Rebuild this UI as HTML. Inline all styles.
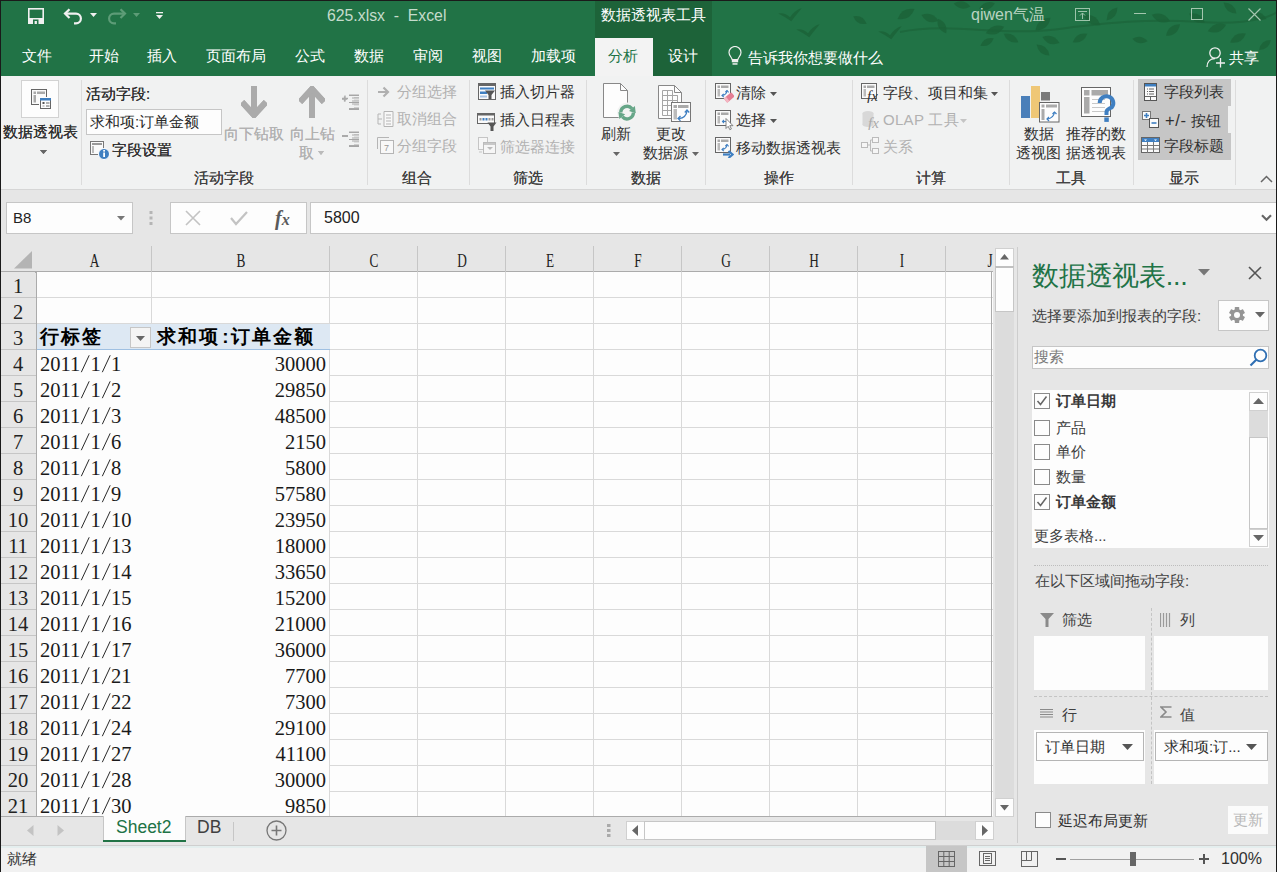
<!DOCTYPE html>
<html><head><meta charset="utf-8">
<style>
*{box-sizing:border-box;margin:0;padding:0}
html,body{width:1277px;height:872px;overflow:hidden;background:#e6e6e6;font-family:"Liberation Sans",sans-serif;color:#262626;position:relative}
.a{position:absolute;white-space:nowrap}
.t{color:#fff;font-size:15px}
.cv{line-height:26px;font-family:"Liberation Serif",serif;font-size:20.5px;color:#1a1a1a;padding-top:2px}
.sl{vertical-align:top;display:inline-block}

</style></head><body>
<div class="a" style="left:0;top:0;width:1277px;height:76px;background:#217346"></div>
<div class="a" style="left:595px;top:0;width:117px;height:76px;background:#1d6339"></div>
<div class="a" style="left:595px;top:38px;width:58px;height:38px;background:#f3f3f3"></div>
<!--LEAVES--><svg class="a" style="left:0;top:0" width="1277" height="76"><g fill="#1b6137" opacity=".75"><path transform="translate(906 14) rotate(-30)" d="M-9.799999999999999 0Q0 -8.232 9.799999999999999 0Q0 8.232 -9.799999999999999 0z"/><path transform="translate(930 18) rotate(20)" d="M-9.1 0Q0 -7.643999999999999 9.1 0Q0 7.643999999999999 -9.1 0z"/><path transform="translate(942 26) rotate(60)" d="M-8.399999999999999 0Q0 -7.055999999999998 8.399999999999999 0Q0 7.055999999999998 -8.399999999999999 0z"/><path transform="translate(995 30) rotate(-20)" d="M-9.799999999999999 0Q0 -8.232 9.799999999999999 0Q0 8.232 -9.799999999999999 0z"/><path transform="translate(1011 38) rotate(30)" d="M-8.399999999999999 0Q0 -7.055999999999998 8.399999999999999 0Q0 7.055999999999998 -8.399999999999999 0z"/><path transform="translate(1043 24) rotate(-40)" d="M-9.799999999999999 0Q0 -8.232 9.799999999999999 0Q0 8.232 -9.799999999999999 0z"/><path transform="translate(1051 40) rotate(20)" d="M-9.1 0Q0 -7.643999999999999 9.1 0Q0 7.643999999999999 -9.1 0z"/><path transform="translate(1080 38) rotate(-30)" d="M-8.399999999999999 0Q0 -7.055999999999998 8.399999999999999 0Q0 7.055999999999998 -8.399999999999999 0z"/><path transform="translate(1092 20) rotate(30)" d="M-9.799999999999999 0Q0 -8.232 9.799999999999999 0Q0 8.232 -9.799999999999999 0z"/><path transform="translate(1112 14) rotate(-50)" d="M-8.399999999999999 0Q0 -7.055999999999998 8.399999999999999 0Q0 7.055999999999998 -8.399999999999999 0z"/><path transform="translate(1161 18) rotate(20)" d="M-9.799999999999999 0Q0 -8.232 9.799999999999999 0Q0 8.232 -9.799999999999999 0z"/><path transform="translate(1173 30) rotate(-40)" d="M-9.1 0Q0 -7.643999999999999 9.1 0Q0 7.643999999999999 -9.1 0z"/><path transform="translate(1197 18) rotate(30)" d="M-9.1 0Q0 -7.643999999999999 9.1 0Q0 7.643999999999999 -9.1 0z"/><path transform="translate(1217 28) rotate(-20)" d="M-9.799999999999999 0Q0 -8.232 9.799999999999999 0Q0 8.232 -9.799999999999999 0z"/><path transform="translate(1230 8) rotate(40)" d="M-8.399999999999999 0Q0 -7.055999999999998 8.399999999999999 0Q0 7.055999999999998 -8.399999999999999 0z"/><path transform="translate(1238 38) rotate(-30)" d="M-9.1 0Q0 -7.643999999999999 9.1 0Q0 7.643999999999999 -9.1 0z"/><path transform="translate(1258 16) rotate(20)" d="M-9.1 0Q0 -7.643999999999999 9.1 0Q0 7.643999999999999 -9.1 0z"/><path transform="translate(962 5) rotate(10)" d="M-8.399999999999999 0Q0 -7.055999999999998 8.399999999999999 0Q0 7.055999999999998 -8.399999999999999 0z"/><path transform="translate(987 6) rotate(-20)" d="M-8.399999999999999 0Q0 -7.055999999999998 8.399999999999999 0Q0 7.055999999999998 -8.399999999999999 0z"/><path transform="translate(1043 50) rotate(40)" d="M-8.399999999999999 0Q0 -7.055999999999998 8.399999999999999 0Q0 7.055999999999998 -8.399999999999999 0z"/><path transform="translate(987 42) rotate(-30)" d="M-7.699999999999999 0Q0 -6.467999999999999 7.699999999999999 0Q0 6.467999999999999 -7.699999999999999 0z"/><path transform="translate(860 20) rotate(30)" d="M-7.699999999999999 0Q0 -6.467999999999999 7.699999999999999 0Q0 6.467999999999999 -7.699999999999999 0z"/><path transform="translate(1140 40) rotate(10)" d="M-7.699999999999999 0Q0 -6.467999999999999 7.699999999999999 0Q0 6.467999999999999 -7.699999999999999 0z"/><path transform="translate(1265 45) rotate(-40)" d="M-7.699999999999999 0Q0 -6.467999999999999 7.699999999999999 0Q0 6.467999999999999 -7.699999999999999 0z"/><path transform="translate(790 16) scale(1.3)" d="M-9 -2Q-4 -3 0 1Q4 -5 9 -6Q4 0 1 4Q-3 1 -9 -2z"/><path transform="translate(808 32) scale(1.3)" d="M-9 -2Q-4 -3 0 1Q4 -5 9 -6Q4 0 1 4Q-3 1 -9 -2z"/><path transform="translate(890 34) scale(1.3)" d="M-9 -2Q-4 -3 0 1Q4 -5 9 -6Q4 0 1 4Q-3 1 -9 -2z"/></g><path d="M900 32C950 22 1000 36 1050 30S1140 18 1200 22 1277 12 1277 12" fill="none" stroke="#1b6137" stroke-width="2" opacity=".6"/></svg>
<!--/LEAVES-->
<!-- QAT -->
<svg class="a" style="left:28px;top:8px" width="16" height="16" viewBox="0 0 16 16"><rect x=".8" y=".8" width="14.4" height="14.4" fill="none" stroke="#f0f0f0" stroke-width="1.6"/><rect x="0" y="10" width="16" height="6" fill="#f0f0f0"/><rect x="5" y="11.5" width="5.5" height="4.5" fill="#217346"/><rect x="6.6" y="13" width="2.3" height="3" fill="#f0f0f0"/></svg>
<svg class="a" style="left:63px;top:8px" width="20" height="17" viewBox="0 0 20 17"><path d="M6.5 1.2L2 5.6l4.5 4.4" fill="none" stroke="#f0f0f0" stroke-width="2.2"/><path d="M2.5 5.6H13A4.9 4.9 0 0 1 13 15.4H11" fill="none" stroke="#f0f0f0" stroke-width="2.2"/></svg>
<svg class="a" style="left:90px;top:13px" width="7" height="4"><path d="M0 0h7L3.5 4z" fill="#f0f0f0"/></svg>
<svg class="a" style="left:107px;top:8px" width="20" height="17" viewBox="0 0 20 17"><path d="M13.5 1.2L18 5.6l-4.5 4.4" fill="none" stroke="#5d9c77" stroke-width="2.2"/><path d="M17.5 5.6H7A4.9 4.9 0 0 0 7 15.4H9" fill="none" stroke="#5d9c77" stroke-width="2.2"/></svg>
<svg class="a" style="left:133px;top:13px" width="7" height="4"><path d="M0 0h7L3.5 4z" fill="#5d9c77"/></svg>
<svg class="a" style="left:156px;top:12px" width="7" height="7"><rect x="0" y="0" width="7" height="1.3" fill="#f0f0f0"/><path d="M0 3h7L3.5 7z" fill="#f0f0f0"/></svg>
<div class="a t" style="left:327px;top:5.5px;font-size:15.8px;color:#c5dccc;line-height:20px">625.xlsx&nbsp; - &nbsp;Excel</div>
<div class="a t" style="left:601px;top:5px;line-height:20px">数据透视表工具</div>
<div class="a t" style="left:971px;top:5px;color:#b9d3c1;line-height:20px;font-size:16px">qiwen气温</div>
<svg class="a" style="left:1075px;top:8px" width="15" height="13"><rect x=".5" y=".5" width="14" height="12" fill="none" stroke="#9cc4aa"/><path d="M3 3.5h9M7.5 5v6M5 7.5l2.5-2.5 2.5 2.5" stroke="#9cc4aa" fill="none"/></svg>
<div class="a" style="left:1134px;top:13px;width:12px;height:1px;background:#a3c6ae"></div>
<div class="a" style="left:1191px;top:8px;width:12px;height:12px;border:1px solid #a3c6ae"></div>
<svg class="a" style="left:1248px;top:8px" width="13" height="13"><path d="M.5 .5l12 12M12.5 .5l-12 12" stroke="#a3c6ae" stroke-width="1.2"/></svg>
<!-- tabs -->
<div class="a t" style="left:22px;top:46px;line-height:20px">文件</div>
<div class="a t" style="left:89px;top:46px;line-height:20px">开始</div>
<div class="a t" style="left:147px;top:46px;line-height:20px">插入</div>
<div class="a t" style="left:206px;top:46px;line-height:20px">页面布局</div>
<div class="a t" style="left:295px;top:46px;line-height:20px">公式</div>
<div class="a t" style="left:354px;top:46px;line-height:20px">数据</div>
<div class="a t" style="left:413px;top:46px;line-height:20px">审阅</div>
<div class="a t" style="left:472px;top:46px;line-height:20px">视图</div>
<div class="a t" style="left:531px;top:46px;line-height:20px">加载项</div>
<div class="a t" style="left:608px;top:46px;line-height:20px;color:#217346">分析</div>
<div class="a t" style="left:668px;top:46px;line-height:20px">设计</div>
<svg class="a" style="left:728px;top:46px" width="14" height="20" viewBox="0 0 14 20"><path d="M4.2 13.5C3.5 11 1 9.5 1 6.5a6 6 0 0 1 12 0c0 3-2.5 4.5-3.2 7z" fill="none" stroke="#f0f0f0" stroke-width="1.2"/><rect x="3.8" y="13.3" width="6.4" height="3" fill="#f0f0f0"/><rect x="4.5" y="17.2" width="5" height="1.5" fill="#f0f0f0"/></svg>
<div class="a t" style="left:748px;top:48px;line-height:20px">告诉我你想要做什么</div>
<svg class="a" style="left:1206px;top:47px" width="20" height="21" viewBox="0 0 20 21"><circle cx="9" cy="6" r="5.2" fill="none" stroke="#f0f0f0" stroke-width="1.3"/><path d="M1 20c0-5 3-8.5 8-8.5" fill="none" stroke="#f0f0f0" stroke-width="1.3"/><path d="M10 16h9M14.5 11v9.5" stroke="#f0f0f0" stroke-width="1.3"/></svg>
<div class="a t" style="left:1229px;top:48px;line-height:20px">共享</div>

<div class="a" style="left:0;top:76px;width:1277px;height:114px;background:#f1f2f2;border-bottom:1px solid #d6d6d6"></div>
<div class="a" style="left:81px;top:80px;width:1px;height:105px;background:#dcdcdc"></div>
<div class="a" style="left:367px;top:80px;width:1px;height:105px;background:#dcdcdc"></div>
<div class="a" style="left:469px;top:80px;width:1px;height:105px;background:#dcdcdc"></div>
<div class="a" style="left:586px;top:80px;width:1px;height:105px;background:#dcdcdc"></div>
<div class="a" style="left:705px;top:80px;width:1px;height:105px;background:#dcdcdc"></div>
<div class="a" style="left:852px;top:80px;width:1px;height:105px;background:#dcdcdc"></div>
<div class="a" style="left:1009px;top:80px;width:1px;height:105px;background:#dcdcdc"></div>
<div class="a" style="left:1133px;top:80px;width:1px;height:105px;background:#dcdcdc"></div>
<div class="a" style="left:1235px;top:80px;width:1px;height:105px;background:#dcdcdc"></div>
<div class="a" style="left:194.0px;top:168px;line-height:20px;font-size:15px;color:#404040;">活动字段</div>
<div class="a" style="left:402.0px;top:168px;line-height:20px;font-size:15px;color:#404040;">组合</div>
<div class="a" style="left:513.0px;top:168px;line-height:20px;font-size:15px;color:#404040;">筛选</div>
<div class="a" style="left:631.0px;top:168px;line-height:20px;font-size:15px;color:#404040;">数据</div>
<div class="a" style="left:764.0px;top:168px;line-height:20px;font-size:15px;color:#404040;">操作</div>
<div class="a" style="left:916.0px;top:168px;line-height:20px;font-size:15px;color:#404040;">计算</div>
<div class="a" style="left:1056.0px;top:168px;line-height:20px;font-size:15px;color:#404040;">工具</div>
<div class="a" style="left:1169.0px;top:168px;line-height:20px;font-size:15px;color:#404040;">显示</div>
<div class="a" style="left:21px;top:80px;width:38px;height:38px;background:#fdfdfd;border:1px solid #d2d2d2"></div>
<svg class="a" style="left:31px;top:89px" width="22" height="22" viewBox="0 0 22 22"><rect x=".5" y=".5" width="15" height="15" fill="#fafafa" stroke="#666"/><rect x="2.5" y="2.5" width="2.5" height="2.5" fill="#aaa"/><rect x="6" y="2.5" width="8" height="2.5" fill="#aaa"/><rect x="2.5" y="6" width="2.5" height="7.5" fill="#aaa"/><rect x="8" y="8" width="13" height="13" fill="#fdfdfd"/><rect x="9.5" y="9.5" width="10" height="10" fill="#fdfdfd" stroke="#666"/><rect x="9" y="9" width="11" height="2.5" fill="#3f7fc1"/><rect x="11.5" y="13" width="2" height="2" fill="#555"/><rect x="11.5" y="16" width="2" height="2" fill="#ccc"/><path d="M15 14h3.5M15 17h3.5" stroke="#666"/></svg>
<div class="a" style="left:3px;top:122px;line-height:20px;font-size:15px;color:#303030;">数据透视表</div>
<svg class="a" style="left:40px;top:150px" width="7" height="4"><path d="M0 0h7L3.5 4z" fill="#666"/></svg>
<div class="a" style="left:86px;top:84px;line-height:20px;font-size:15px;color:#303030;">活动字段:</div>
<div class="a" style="left:86px;top:109px;width:136px;height:26px;background:#fdfdfd;border:1px solid #c6c6c6"></div>
<div class="a" style="left:90px;top:112px;line-height:20px;font-size:15px;color:#262626;">求和项:订单金额</div>
<svg class="a" style="left:90px;top:141px" width="20" height="19" viewBox="0 0 20 19"><rect x=".5" y=".5" width="13" height="13" fill="#fafafa" stroke="#777"/><rect x="2" y="2" width="10" height="2" fill="#999"/><rect x="2" y="5" width="2" height="7" fill="#bbb"/><circle cx="14" cy="13" r="5.5" fill="#3f7fc1" stroke="#fff"/><rect x="13.2" y="11.5" width="1.8" height="4.5" fill="#fff"/><rect x="13.2" y="9" width="1.8" height="1.6" fill="#fff"/></svg>
<div class="a" style="left:112px;top:140px;line-height:20px;font-size:15px;color:#303030;">字段设置</div>
<svg class="a" style="left:241px;top:86px" width="26" height="32" viewBox="0 0 26 32"><rect x="10" y="0" width="6" height="26" fill="#ababab"/><path d="M1 16l12 13 12-13" fill="none" stroke="#ababab" stroke-width="6"/></svg>
<svg class="a" style="left:299px;top:86px" width="26" height="32" viewBox="0 0 26 32"><rect x="10" y="6" width="6" height="26" fill="#ababab"/><path d="M1 16l12-13 12 13" fill="none" stroke="#ababab" stroke-width="6"/></svg>
<div class="a" style="left:224px;top:124px;line-height:20px;font-size:15px;color:#b1b1b1;">向下钻取</div>
<div class="a" style="left:290px;top:124px;line-height:20px;font-size:15px;color:#b1b1b1;">向上钻</div>
<div class="a" style="left:299px;top:143px;line-height:20px;font-size:15px;color:#b1b1b1;">取</div>
<svg class="a" style="left:318px;top:151px" width="6" height="4"><path d="M0 0h6L3.0 4z" fill="#bbb"/></svg>
<svg class="a" style="left:342px;top:94px" width="17" height="17" viewBox="0 0 17 17"><path d="M0 4.5h6M3 1.5v6" stroke="#aaa" stroke-width="1.3"/><path d="M7 1.5h10M7 8.5h10M7 15.5h10" stroke="#a5a5a5"/><path d="M12 3.5h5M12 6h5M12 11h5M12 13.5h5" stroke="#cfcfcf"/></svg>
<svg class="a" style="left:342px;top:131px" width="17" height="17" viewBox="0 0 17 17"><path d="M0 5h6" stroke="#999" stroke-width="1.6"/><path d="M7 1.5h10M7 8.5h10M7 15.5h10" stroke="#a5a5a5"/><path d="M12 3.5h5M12 6h5M12 11h5M12 13.5h5" stroke="#cfcfcf"/></svg>
<div class="a" style="left:194.0px;top:168px;line-height:20px;font-size:15px;color:#404040;">活动字段</div>
<div class="a" style="left:402.0px;top:168px;line-height:20px;font-size:15px;color:#404040;">组合</div>
<div class="a" style="left:513.0px;top:168px;line-height:20px;font-size:15px;color:#404040;">筛选</div>
<div class="a" style="left:631.0px;top:168px;line-height:20px;font-size:15px;color:#404040;">数据</div>
<div class="a" style="left:764.0px;top:168px;line-height:20px;font-size:15px;color:#404040;">操作</div>
<div class="a" style="left:916.0px;top:168px;line-height:20px;font-size:15px;color:#404040;">计算</div>
<div class="a" style="left:1056.0px;top:168px;line-height:20px;font-size:15px;color:#404040;">工具</div>
<div class="a" style="left:1169.0px;top:168px;line-height:20px;font-size:15px;color:#404040;">显示</div>
<div class="a" style="left:21px;top:80px;width:38px;height:38px;background:#fdfdfd;border:1px solid #d2d2d2"></div>
<svg class="a" style="left:31px;top:89px" width="22" height="22" viewBox="0 0 22 22"><rect x=".5" y=".5" width="15" height="15" fill="#fafafa" stroke="#666"/><rect x="2.5" y="2.5" width="2.5" height="2.5" fill="#aaa"/><rect x="6" y="2.5" width="8" height="2.5" fill="#aaa"/><rect x="2.5" y="6" width="2.5" height="7.5" fill="#aaa"/><rect x="8" y="8" width="13" height="13" fill="#fdfdfd"/><rect x="9.5" y="9.5" width="10" height="10" fill="#fdfdfd" stroke="#666"/><rect x="9" y="9" width="11" height="2.5" fill="#3f7fc1"/><rect x="11.5" y="13" width="2" height="2" fill="#555"/><rect x="11.5" y="16" width="2" height="2" fill="#ccc"/><path d="M15 14h3.5M15 17h3.5" stroke="#666"/></svg>
<div class="a" style="left:3px;top:122px;line-height:20px;font-size:15px;color:#303030;">数据透视表</div>
<svg class="a" style="left:40px;top:150px" width="7" height="4"><path d="M0 0h7L3.5 4z" fill="#666"/></svg>
<div class="a" style="left:86px;top:84px;line-height:20px;font-size:15px;color:#303030;">活动字段:</div>
<div class="a" style="left:86px;top:109px;width:136px;height:26px;background:#fdfdfd;border:1px solid #c6c6c6"></div>
<div class="a" style="left:90px;top:112px;line-height:20px;font-size:15px;color:#262626;">求和项:订单金额</div>
<svg class="a" style="left:90px;top:141px" width="20" height="19" viewBox="0 0 20 19"><rect x=".5" y=".5" width="13" height="13" fill="#fafafa" stroke="#777"/><rect x="2" y="2" width="10" height="2" fill="#999"/><rect x="2" y="5" width="2" height="7" fill="#bbb"/><circle cx="14" cy="13" r="5.5" fill="#3f7fc1" stroke="#fff"/><rect x="13.2" y="11.5" width="1.8" height="4.5" fill="#fff"/><rect x="13.2" y="9" width="1.8" height="1.6" fill="#fff"/></svg>
<div class="a" style="left:112px;top:140px;line-height:20px;font-size:15px;color:#303030;">字段设置</div>
<svg class="a" style="left:241px;top:86px" width="26" height="32" viewBox="0 0 26 32"><rect x="10" y="0" width="6" height="26" fill="#ababab"/><path d="M1 16l12 13 12-13" fill="none" stroke="#ababab" stroke-width="6"/></svg>
<svg class="a" style="left:299px;top:86px" width="26" height="32" viewBox="0 0 26 32"><rect x="10" y="6" width="6" height="26" fill="#ababab"/><path d="M1 16l12-13 12 13" fill="none" stroke="#ababab" stroke-width="6"/></svg>
<div class="a" style="left:224px;top:124px;line-height:20px;font-size:15px;color:#b1b1b1;">向下钻取</div>
<div class="a" style="left:290px;top:124px;line-height:20px;font-size:15px;color:#b1b1b1;">向上钻</div>
<div class="a" style="left:299px;top:143px;line-height:20px;font-size:15px;color:#b1b1b1;">取</div>
<svg class="a" style="left:318px;top:151px" width="6" height="4"><path d="M0 0h6L3.0 4z" fill="#bbb"/></svg>
<svg class="a" style="left:342px;top:94px" width="17" height="16" viewBox="0 0 17 16"><path d="M0 5h5M2.5 2.5v5" stroke="#aaa" stroke-width="1.3"/><path d="M7 1h10M10 4h7M10 7h7M10 10h7M7 14.5h10" stroke="#aaa"/></svg>
<svg class="a" style="left:342px;top:131px" width="17" height="16" viewBox="0 0 17 16"><path d="M0 5h5" stroke="#aaa" stroke-width="1.3"/><path d="M7 1h10M10 4h7M10 7h7M10 10h7M7 14.5h10" stroke="#aaa"/></svg>
<svg class="a" style="left:378px;top:86px" width="13" height="12" viewBox="0 0 13 12"><path d="M0 6h9M5.5 1.5L10 6l-4.5 4.5" fill="none" stroke="#b0b0b0" stroke-width="2.2"/></svg>
<div class="a" style="left:397px;top:82px;line-height:20px;font-size:15px;color:#b1b1b1;">分组选择</div>
<svg class="a" style="left:377px;top:111px" width="17" height="16" viewBox="0 0 17 16"><path d="M7 .5h9v15H7z" fill="#f8f8f8" stroke="#b5b5b5"/><path d="M9 4h5M9 7h5M9 10h5M9 13h5" stroke="#b5b5b5"/><path d="M4 3h-3v10h3" fill="none" stroke="#b5b5b5"/><path d="M1 8h4" stroke="#b5b5b5"/></svg>
<div class="a" style="left:397px;top:109px;line-height:20px;font-size:15px;color:#b1b1b1;">取消组合</div>
<svg class="a" style="left:377px;top:137px" width="17" height="17" viewBox="0 0 17 17"><path d="M.5 12V.5H12" fill="none" stroke="#b5b5b5"/><rect x="3.5" y="3.5" width="13" height="13" fill="#f8f8f8" stroke="#b5b5b5"/><text x="7" y="14" font-size="9" fill="#999" font-family="Liberation Sans">7</text></svg>
<div class="a" style="left:397px;top:136px;line-height:20px;font-size:15px;color:#b1b1b1;">分组字段</div>
<svg class="a" style="left:478px;top:83px" width="18" height="17" viewBox="0 0 18 17"><rect x=".5" y=".5" width="17" height="16" fill="#fafafa" stroke="#666"/><rect x="0" y="0" width="18" height="3" fill="#666"/><rect x="2" y="4.5" width="14" height="2" fill="#3f7fc1"/><rect x="2" y="8.5" width="7" height="2.5" fill="#3f7fc1"/><rect x="2" y="12.5" width="7" height="2" fill="#a9c4e4"/><path d="M7 7.5h10l-3.5 4.5v4h-3v-4z" fill="#555"/></svg>
<div class="a" style="left:500px;top:82px;line-height:20px;font-size:15px;color:#303030;">插入切片器</div>
<svg class="a" style="left:477px;top:113px" width="20" height="18" viewBox="0 0 20 18"><rect x=".5" y=".5" width="17" height="10" fill="#fafafa" stroke="#666"/><rect x="0" y="0" width="18" height="2.5" fill="#666"/><rect x="2.5" y="5" width="2" height="2.5" fill="#999"/><rect x="5.5" y="5" width="2" height="2.5" fill="#3f7fc1"/><rect x="8.5" y="5" width="2" height="2.5" fill="#3f7fc1"/><rect x="11.5" y="5" width="2" height="2.5" fill="#999"/><rect x="14.5" y="5" width="2" height="2.5" fill="#999"/><path d="M10.5 9.5h9l-3 4v4.5h-3v-4.5z" fill="#555"/></svg>
<div class="a" style="left:500px;top:110px;line-height:20px;font-size:15px;color:#303030;">插入日程表</div>
<svg class="a" style="left:478px;top:137px" width="18" height="18" viewBox="0 0 18 18"><rect x=".5" y=".5" width="9" height="12" fill="#f6f6f6" stroke="#c5c5c5"/><rect x="5.5" y="5.5" width="12" height="11" fill="#f6f6f6" stroke="#bbb"/><rect x="6" y="6" width="11" height="2" fill="#c8c8c8"/><path d="M9 10h6l-3 3z" fill="#bbb"/><path d="M1 15h3" stroke="#c5c5c5"/></svg>
<div class="a" style="left:500px;top:137px;line-height:20px;font-size:15px;color:#b1b1b1;">筛选器连接</div>
<svg class="a" style="left:603px;top:83px" width="36" height="40" viewBox="0 0 36 40"><path d="M.5 .5h17l7 7v27H.5z" fill="#fdfdfd" stroke="#888"/><path d="M17.5 .5v7h7" fill="none" stroke="#888"/><circle cx="24.1" cy="29.6" r="10" fill="#f3f3f3"/><path d="M17.8 29.6A6.3 6.3 0 0 1 28.93 25.55" fill="none" stroke="#66a688" stroke-width="3.4"/><path d="M31.84 23.1L26.02 28L32.8 30.2z" fill="#66a688"/><path d="M30.4 29.6A6.3 6.3 0 0 1 19.27 33.65" fill="none" stroke="#66a688" stroke-width="3.4"/><path d="M16.36 36.09L22.18 31.21L15.41 29.05z" fill="#66a688"/></svg>
<div class="a" style="left:601px;top:124px;line-height:20px;font-size:15px;color:#303030;">刷新</div>
<svg class="a" style="left:613px;top:152px" width="7" height="4"><path d="M0 0h7L3.5 4z" fill="#666"/></svg>
<svg class="a" style="left:657px;top:84px" width="35" height="39" viewBox="0 0 35 39"><path d="M1.5 1.5h16l7 7v26h-23z" fill="#fdfdfd" stroke="#888"/><path d="M17.5 1.5v7h7" fill="none" stroke="#888"/><path d="M5.5 6.5h10v5h5v20h-15z" fill="none" stroke="#a5a5a5"/><path d="M5.5 11.5h15M5.5 16.5h15M5.5 21.5h15M5.5 26.5h15M10.5 6.5v25M15.5 6.5v25" stroke="#a5a5a5"/><rect x="14.5" y="18.5" width="19" height="19" fill="#fdfdfd" stroke="#777"/><rect x="16.5" y="21" width="3.5" height="3" fill="#aaa"/><rect x="21" y="21" width="10.5" height="3" fill="#aaa"/><rect x="16.5" y="25" width="3.5" height="10.5" fill="#bbb"/><path d="M22 34.5Q29 34 30 27" fill="none" stroke="#3f7fc1" stroke-width="1.4"/><path d="M23.5 32l-2.5 2.5 2.5 2.2M27.8 28.5l2.2-2.5 2.2 2.5" fill="none" stroke="#3f7fc1" stroke-width="1.3"/></svg>
<div class="a" style="left:656px;top:124px;line-height:20px;font-size:15px;color:#303030;">更改</div>
<div class="a" style="left:643px;top:143px;line-height:20px;font-size:15px;color:#303030;">数据源</div>
<svg class="a" style="left:692px;top:152px" width="7" height="4"><path d="M0 0h7L3.5 4z" fill="#666"/></svg>
<svg class="a" style="left:714px;top:83px" width="20" height="21" viewBox="0 0 20 21"><rect x="1.5" y=".5" width="15" height="15" fill="#fafafa" stroke="#666"/><rect x="3.5" y="2.5" width="2.5" height="2.5" fill="#aaa"/><rect x="7" y="2.5" width="7.5" height="2.5" fill="#aaa"/><rect x="3.5" y="6" width="2.5" height="7.5" fill="#bbb"/><path d="M8 12.5Q12.5 12 13 7.5" fill="none" stroke="#3f7fc1" stroke-width="1.2"/><path d="M9.8 10.8L8 12.5l1.8 1.6M11.3 9.2L13 7.5l1.6 1.8" fill="none" stroke="#3f7fc1" stroke-width="1.1"/><g transform="rotate(-40 15 15)"><rect x="10.5" y="12" width="10" height="5.5" rx="1" fill="#e57e94"/><rect x="10.5" y="12" width="3" height="5.5" fill="#f4b6c2"/></g></svg>
<div class="a" style="left:736px;top:83px;line-height:20px;font-size:15px;color:#303030;">清除</div>
<svg class="a" style="left:770px;top:92px" width="7" height="4"><path d="M0 0h7L3.5 4z" fill="#555"/></svg>
<svg class="a" style="left:714px;top:110px" width="20" height="21" viewBox="0 0 20 21"><rect x="1.5" y=".5" width="15" height="15" fill="#fafafa" stroke="#666"/><rect x="3.5" y="2.5" width="2.5" height="2.5" fill="#aaa"/><rect x="7" y="2.5" width="7.5" height="2.5" fill="#aaa"/><rect x="3.5" y="6" width="2.5" height="7.5" fill="#bbb"/><path d="M12 11.5H8.5M10 10l-1.5 1.5 1.5 1.5" fill="none" stroke="#3f7fc1" stroke-width="1.1"/><path d="M12 8.5v10l2.2-2.2 1.6 3.4 1.6-.8-1.6-3.2h3.2z" fill="#fff" stroke="#777" stroke-width=".9"/></svg>
<div class="a" style="left:736px;top:110px;line-height:20px;font-size:15px;color:#303030;">选择</div>
<svg class="a" style="left:770px;top:119px" width="7" height="4"><path d="M0 0h7L3.5 4z" fill="#555"/></svg>
<svg class="a" style="left:714px;top:137px" width="20" height="21" viewBox="0 0 20 21"><rect x="1.5" y=".5" width="15" height="15" fill="#fafafa" stroke="#666"/><rect x="3.5" y="2.5" width="2.5" height="2.5" fill="#aaa"/><rect x="7" y="2.5" width="7.5" height="2.5" fill="#aaa"/><rect x="3.5" y="6" width="2.5" height="7.5" fill="#bbb"/><path d="M8 12.5Q12.5 12 13 7.5" fill="none" stroke="#3f7fc1" stroke-width="1.2"/><path d="M9.8 10.8L8 12.5l1.8 1.6M11.3 9.2L13 7.5l1.6 1.8" fill="none" stroke="#3f7fc1" stroke-width="1.1"/><path d="M9 17.5h7" stroke="#3f7fc1" stroke-width="2.2"/><path d="M14.5 14l4 3.5-4 3.5" fill="none" stroke="#3f7fc1" stroke-width="2.2"/></svg>
<div class="a" style="left:736px;top:138px;line-height:20px;font-size:15px;color:#303030;">移动数据透视表</div>
<svg class="a" style="left:860px;top:83px" width="22" height="20" viewBox="0 0 22 20"><rect x="1.5" y=".5" width="15" height="15" fill="#fafafa" stroke="#666"/><rect x="3.5" y="2.5" width="2.5" height="2.5" fill="#aaa"/><rect x="7" y="2.5" width="7.5" height="2.5" fill="#aaa"/><rect x="3.5" y="6" width="2.5" height="7.5" fill="#bbb"/><text x="7" y="17.5" font-size="15" font-style="italic" font-family="Liberation Serif" fill="#333">fx</text></svg>
<div class="a" style="left:883px;top:83px;line-height:20px;font-size:15px;color:#303030;">字段、项目和集</div>
<svg class="a" style="left:991px;top:92px" width="7" height="4"><path d="M0 0h7L3.5 4z" fill="#555"/></svg>
<svg class="a" style="left:861px;top:110px" width="22" height="20" viewBox="0 0 22 20"><ellipse cx="7" cy="3.5" rx="5.5" ry="2.5" fill="#d8d8d8"/><rect x="1.5" y="3.5" width="11" height="11" fill="#d8d8d8"/><ellipse cx="7" cy="14.5" rx="5.5" ry="2.5" fill="#d8d8d8"/><text x="7" y="18" font-size="15" font-style="italic" font-family="Liberation Serif" fill="#aaa">fx</text></svg>
<div class="a" style="left:883px;top:110px;line-height:20px;font-size:15px;color:#b1b1b1;letter-spacing:.3px">OLAP 工具</div>
<svg class="a" style="left:960px;top:119px" width="7" height="4"><path d="M0 0h7L3.5 4z" fill="#c5c5c5"/></svg>
<svg class="a" style="left:861px;top:137px" width="18" height="17" viewBox="0 0 18 17"><rect x=".5" y="5.5" width="6" height="5" fill="#f6f6f6" stroke="#bbb"/><rect x="11.5" y=".5" width="6" height="5" fill="#f6f6f6" stroke="#bbb"/><rect x="11.5" y="11.5" width="6" height="5" fill="#f6f6f6" stroke="#bbb"/><path d="M7 8h2.5M9.5 3v11M9.5 3h2M9.5 14h2" fill="none" stroke="#bbb"/></svg>
<div class="a" style="left:883px;top:137px;line-height:20px;font-size:15px;color:#b1b1b1;">关系</div>
<svg class="a" style="left:1021px;top:86px" width="39" height="37" viewBox="0 0 39 37"><rect x="0" y="10" width="9" height="22" fill="#4a7fb9"/><rect x="10" y="0" width="9" height="32" fill="#efc776"/><rect x="20" y="6" width="9" height="8.5" fill="#7a7a7a"/><rect x="18.5" y="16.5" width="19.5" height="19.5" fill="#fdfdfd" stroke="#666"/><rect x="20.5" y="18.5" width="3" height="3" fill="#aaa"/><rect x="25" y="18.5" width="11" height="3" fill="#aaa"/><rect x="20.5" y="23" width="3" height="11" fill="#aaa"/><path d="M26 33Q32.5 32.5 33.5 26" fill="none" stroke="#3f7fc1" stroke-width="1.3"/><path d="M28 31l-2 2 2 2M31.5 28l2-2 2 2" fill="none" stroke="#3f7fc1" stroke-width="1.2"/></svg>
<div class="a" style="left:1024px;top:124px;line-height:20px;font-size:15px;color:#303030;">数据</div>
<div class="a" style="left:1016px;top:143px;line-height:20px;font-size:15px;color:#303030;">透视图</div>
<svg class="a" style="left:1081px;top:87px" width="36" height="36" viewBox="0 0 36 36"><rect x=".5" y=".5" width="29" height="29" fill="#fdfdfd" stroke="#666"/><rect x="3" y="3" width="5.5" height="5.5" fill="#aaa"/><rect x="10.5" y="3" width="16.5" height="5.5" fill="#aaa"/><rect x="3" y="10" width="5.5" height="16.5" fill="#aaa"/><path d="M11 12.5h13M11 16.5h13M11 20.5h13M11 24.5h13" stroke="#c8c8c8" stroke-width="1.2"/><path d="M18.7 16A6.8 6.8 0 1 1 30.7 20.4Q25.5 22.5 25.5 25V28" fill="none" stroke="#3f7fc1" stroke-width="4"/><rect x="23.3" y="30.4" width="4.5" height="4.5" fill="#3f7fc1"/></svg>
<div class="a" style="left:1066px;top:124px;line-height:20px;font-size:15px;color:#303030;">推荐的数</div>
<div class="a" style="left:1066px;top:143px;line-height:20px;font-size:15px;color:#303030;">据透视表</div>
<div class="a" style="left:1138px;top:79px;width:93px;height:81px;background:#c6c6c6"></div>
<svg class="a" style="left:1144px;top:83px" width="13" height="18" viewBox="0 0 13 18"><rect x=".5" y=".5" width="12" height="17" fill="#fafafa" stroke="#555"/><rect x="1" y="1" width="11" height="2.5" fill="#3f7fc1"/><path d="M3 6h1M5 6h5M3 8.5h1M5 8.5h5M3 11h1M5 11h5M1 13.5h11M6.5 13.5v4" stroke="#666"/></svg>
<div class="a" style="left:1164px;top:82px;line-height:20px;font-size:15px;color:#303030;">字段列表</div>
<svg class="a" style="left:1142px;top:111px" width="17" height="17" viewBox="0 0 17 17"><rect x=".5" y=".5" width="8" height="8" fill="#fafafa" stroke="#777"/><path d="M2 4.5h5M4.5 2v5" stroke="#3f7fc1" stroke-width="1.6"/><rect x="7.5" y="7.5" width="9" height="9" fill="#fafafa" stroke="#555"/><path d="M9.5 12h5" stroke="#3f7fc1" stroke-width="1.6"/></svg>
<div class="a" style="left:1165px;top:110px;line-height:20px;font-size:15px;color:#303030;"><span style="font-size:16.5px;letter-spacing:.6px">+/-</span>&nbsp;按钮</div>
<div class="a" style="left:1228px;top:106px;width:3px;height:27px;background:#f1f2f2"></div>
<svg class="a" style="left:1141px;top:137px" width="19" height="16" viewBox="0 0 19 16"><rect x=".5" y=".5" width="18" height="15" fill="#fafafa" stroke="#666"/><rect x="1" y="1" width="17" height="4" fill="#3f7fc1"/><path d="M1 8.5h17M1 12h17M6.5 5v11M12.5 5v11" stroke="#777"/><path d="M3 2.5h3l-1.5 1.5zM13 2.5h3l-1.5 1.5z" fill="#fff"/></svg>
<div class="a" style="left:1164px;top:136px;line-height:20px;font-size:15px;color:#303030;">字段标题</div>
<svg class="a" style="left:1260px;top:175px" width="13" height="8"><path d="M1 7l5.5-5.5L12 7" fill="none" stroke="#666" stroke-width="1.5"/></svg>
<div class="a" style="left:0;top:190px;width:1277px;height:56px;background:#e6e6e6"></div>
<div class="a" style="left:6px;top:202px;width:127px;height:32px;background:#fdfdfd;border:1px solid #c6c6c6"></div>
<div class="a" style="left:13px;top:208px;line-height:20px;font-size:15px;color:#222">B8</div>
<svg class="a" style="left:117px;top:216px" width="8" height="5"><path d="M0 0h8L4 4.5z" fill="#777"/></svg>
<svg class="a" style="left:149px;top:211px" width="4" height="14"><rect x=".5" y="0" width="3" height="3" fill="#b5b5b5"/><rect x=".5" y="5.5" width="3" height="3" fill="#b5b5b5"/><rect x=".5" y="11" width="3" height="3" fill="#b5b5b5"/></svg>
<div class="a" style="left:170px;top:202px;width:137px;height:32px;background:#fdfdfd;border:1px solid #c6c6c6"></div>
<svg class="a" style="left:185px;top:210px" width="16" height="16"><path d="M1 1l14 14M15 1L1 15" stroke="#c3c3c3" stroke-width="1.6"/></svg>
<svg class="a" style="left:230px;top:210px" width="18" height="16"><path d="M1 8l5 6L17 2" fill="none" stroke="#c3c3c3" stroke-width="2.2"/></svg>
<div class="a" style="left:275px;top:207px;line-height:22px;font-size:20px;color:#5a5a5a;font-family:'Liberation Serif',serif;font-style:italic;font-weight:bold">f<span style="font-size:16px">x</span></div>
<div class="a" style="left:310px;top:202px;width:967px;height:32px;background:#fdfdfd;border:1px solid #c6c6c6;border-right:none"></div>
<div class="a" style="left:324px;top:208px;line-height:20px;font-size:16px;color:#222">5800</div>
<svg class="a" style="left:1261px;top:214px" width="11" height="8"><path d="M1 1.2l4.5 4.5L10 1.2" fill="none" stroke="#666" stroke-width="2.2"/></svg>
<div class="a" style="left:0;top:246px;width:993px;height:570px;background:#fdfdfd;overflow:hidden">
<div class="a" style="left:0;top:0;width:993px;height:26px;background:#e6e6e6;border-bottom:1px solid #ababab"></div>
<div class="a" style="left:0;top:26px;width:37px;height:560px;background:#e6e6e6;border-right:1px solid #ababab"></div>
<div class="a" style="left:35px;top:25px;width:2px;height:2px;background:#ababab"></div>
<svg class="a" style="left:14px;top:5px" width="19" height="18"><path d="M18 0v17.5H0z" fill="#b4b4b4"/></svg>
<div class="a" style="left:151px;top:0;width:1px;height:26px;background:#c6c6c6"></div>
<div class="a" style="left:37px;top:2px;width:115px;text-align:center;line-height:26px;font-family:'Liberation Serif',serif;font-size:18.5px;color:#222;transform:scaleX(.72)">A</div>
<div class="a" style="left:151px;top:26px;width:1px;height:560px;background:#d9d9d9"></div>
<div class="a" style="left:329px;top:0;width:1px;height:26px;background:#c6c6c6"></div>
<div class="a" style="left:152px;top:2px;width:178px;text-align:center;line-height:26px;font-family:'Liberation Serif',serif;font-size:18.5px;color:#222;transform:scaleX(.72)">B</div>
<div class="a" style="left:329px;top:26px;width:1px;height:560px;background:#d9d9d9"></div>
<div class="a" style="left:417px;top:0;width:1px;height:26px;background:#c6c6c6"></div>
<div class="a" style="left:330px;top:2px;width:88px;text-align:center;line-height:26px;font-family:'Liberation Serif',serif;font-size:18.5px;color:#222;transform:scaleX(.72)">C</div>
<div class="a" style="left:417px;top:26px;width:1px;height:560px;background:#d9d9d9"></div>
<div class="a" style="left:505px;top:0;width:1px;height:26px;background:#c6c6c6"></div>
<div class="a" style="left:418px;top:2px;width:88px;text-align:center;line-height:26px;font-family:'Liberation Serif',serif;font-size:18.5px;color:#222;transform:scaleX(.72)">D</div>
<div class="a" style="left:505px;top:26px;width:1px;height:560px;background:#d9d9d9"></div>
<div class="a" style="left:593px;top:0;width:1px;height:26px;background:#c6c6c6"></div>
<div class="a" style="left:506px;top:2px;width:88px;text-align:center;line-height:26px;font-family:'Liberation Serif',serif;font-size:18.5px;color:#222;transform:scaleX(.72)">E</div>
<div class="a" style="left:593px;top:26px;width:1px;height:560px;background:#d9d9d9"></div>
<div class="a" style="left:681px;top:0;width:1px;height:26px;background:#c6c6c6"></div>
<div class="a" style="left:594px;top:2px;width:88px;text-align:center;line-height:26px;font-family:'Liberation Serif',serif;font-size:18.5px;color:#222;transform:scaleX(.72)">F</div>
<div class="a" style="left:681px;top:26px;width:1px;height:560px;background:#d9d9d9"></div>
<div class="a" style="left:769px;top:0;width:1px;height:26px;background:#c6c6c6"></div>
<div class="a" style="left:682px;top:2px;width:88px;text-align:center;line-height:26px;font-family:'Liberation Serif',serif;font-size:18.5px;color:#222;transform:scaleX(.72)">G</div>
<div class="a" style="left:769px;top:26px;width:1px;height:560px;background:#d9d9d9"></div>
<div class="a" style="left:857px;top:0;width:1px;height:26px;background:#c6c6c6"></div>
<div class="a" style="left:770px;top:2px;width:88px;text-align:center;line-height:26px;font-family:'Liberation Serif',serif;font-size:18.5px;color:#222;transform:scaleX(.72)">H</div>
<div class="a" style="left:857px;top:26px;width:1px;height:560px;background:#d9d9d9"></div>
<div class="a" style="left:945px;top:0;width:1px;height:26px;background:#c6c6c6"></div>
<div class="a" style="left:858px;top:2px;width:88px;text-align:center;line-height:26px;font-family:'Liberation Serif',serif;font-size:18.5px;color:#222;transform:scaleX(.72)">I</div>
<div class="a" style="left:945px;top:26px;width:1px;height:560px;background:#d9d9d9"></div>
<div class="a" style="left:1033px;top:0;width:1px;height:26px;background:#c6c6c6"></div>
<div class="a" style="left:946px;top:2px;width:88px;text-align:center;line-height:26px;font-family:'Liberation Serif',serif;font-size:18.5px;color:#222;transform:scaleX(.72)">J</div>
<div class="a" style="left:1033px;top:26px;width:1px;height:560px;background:#d9d9d9"></div>
<div class="a" style="left:0;top:51px;width:36px;height:1px;background:#c6c6c6"></div>
<div class="a" style="left:37px;top:51px;width:960px;height:1px;background:#d9d9d9"></div>
<div class="a" style="left:0;top:25px;width:36px;text-align:center;line-height:26px;font-family:'Liberation Serif',serif;font-size:20.5px;color:#222;padding-top:2px">1</div>
<div class="a" style="left:0;top:77px;width:36px;height:1px;background:#c6c6c6"></div>
<div class="a" style="left:37px;top:77px;width:960px;height:1px;background:#d9d9d9"></div>
<div class="a" style="left:0;top:51px;width:36px;text-align:center;line-height:26px;font-family:'Liberation Serif',serif;font-size:20.5px;color:#222;padding-top:2px">2</div>
<div class="a" style="left:0;top:103px;width:36px;height:1px;background:#c6c6c6"></div>
<div class="a" style="left:37px;top:103px;width:960px;height:1px;background:#d9d9d9"></div>
<div class="a" style="left:0;top:77px;width:36px;text-align:center;line-height:26px;font-family:'Liberation Serif',serif;font-size:20.5px;color:#222;padding-top:2px">3</div>
<div class="a" style="left:0;top:129px;width:36px;height:1px;background:#c6c6c6"></div>
<div class="a" style="left:37px;top:129px;width:960px;height:1px;background:#d9d9d9"></div>
<div class="a" style="left:0;top:103px;width:36px;text-align:center;line-height:26px;font-family:'Liberation Serif',serif;font-size:20.5px;color:#222;padding-top:2px">4</div>
<div class="a" style="left:0;top:155px;width:36px;height:1px;background:#c6c6c6"></div>
<div class="a" style="left:37px;top:155px;width:960px;height:1px;background:#d9d9d9"></div>
<div class="a" style="left:0;top:129px;width:36px;text-align:center;line-height:26px;font-family:'Liberation Serif',serif;font-size:20.5px;color:#222;padding-top:2px">5</div>
<div class="a" style="left:0;top:181px;width:36px;height:1px;background:#c6c6c6"></div>
<div class="a" style="left:37px;top:181px;width:960px;height:1px;background:#d9d9d9"></div>
<div class="a" style="left:0;top:155px;width:36px;text-align:center;line-height:26px;font-family:'Liberation Serif',serif;font-size:20.5px;color:#222;padding-top:2px">6</div>
<div class="a" style="left:0;top:207px;width:36px;height:1px;background:#c6c6c6"></div>
<div class="a" style="left:37px;top:207px;width:960px;height:1px;background:#d9d9d9"></div>
<div class="a" style="left:0;top:181px;width:36px;text-align:center;line-height:26px;font-family:'Liberation Serif',serif;font-size:20.5px;color:#222;padding-top:2px">7</div>
<div class="a" style="left:0;top:233px;width:36px;height:1px;background:#c6c6c6"></div>
<div class="a" style="left:37px;top:233px;width:960px;height:1px;background:#d9d9d9"></div>
<div class="a" style="left:0;top:207px;width:36px;text-align:center;line-height:26px;font-family:'Liberation Serif',serif;font-size:20.5px;color:#222;padding-top:2px">8</div>
<div class="a" style="left:0;top:259px;width:36px;height:1px;background:#c6c6c6"></div>
<div class="a" style="left:37px;top:259px;width:960px;height:1px;background:#d9d9d9"></div>
<div class="a" style="left:0;top:233px;width:36px;text-align:center;line-height:26px;font-family:'Liberation Serif',serif;font-size:20.5px;color:#222;padding-top:2px">9</div>
<div class="a" style="left:0;top:285px;width:36px;height:1px;background:#c6c6c6"></div>
<div class="a" style="left:37px;top:285px;width:960px;height:1px;background:#d9d9d9"></div>
<div class="a" style="left:0;top:259px;width:36px;text-align:center;line-height:26px;font-family:'Liberation Serif',serif;font-size:20.5px;color:#222;padding-top:2px">10</div>
<div class="a" style="left:0;top:311px;width:36px;height:1px;background:#c6c6c6"></div>
<div class="a" style="left:37px;top:311px;width:960px;height:1px;background:#d9d9d9"></div>
<div class="a" style="left:0;top:285px;width:36px;text-align:center;line-height:26px;font-family:'Liberation Serif',serif;font-size:20.5px;color:#222;padding-top:2px">11</div>
<div class="a" style="left:0;top:337px;width:36px;height:1px;background:#c6c6c6"></div>
<div class="a" style="left:37px;top:337px;width:960px;height:1px;background:#d9d9d9"></div>
<div class="a" style="left:0;top:311px;width:36px;text-align:center;line-height:26px;font-family:'Liberation Serif',serif;font-size:20.5px;color:#222;padding-top:2px">12</div>
<div class="a" style="left:0;top:363px;width:36px;height:1px;background:#c6c6c6"></div>
<div class="a" style="left:37px;top:363px;width:960px;height:1px;background:#d9d9d9"></div>
<div class="a" style="left:0;top:337px;width:36px;text-align:center;line-height:26px;font-family:'Liberation Serif',serif;font-size:20.5px;color:#222;padding-top:2px">13</div>
<div class="a" style="left:0;top:389px;width:36px;height:1px;background:#c6c6c6"></div>
<div class="a" style="left:37px;top:389px;width:960px;height:1px;background:#d9d9d9"></div>
<div class="a" style="left:0;top:363px;width:36px;text-align:center;line-height:26px;font-family:'Liberation Serif',serif;font-size:20.5px;color:#222;padding-top:2px">14</div>
<div class="a" style="left:0;top:415px;width:36px;height:1px;background:#c6c6c6"></div>
<div class="a" style="left:37px;top:415px;width:960px;height:1px;background:#d9d9d9"></div>
<div class="a" style="left:0;top:389px;width:36px;text-align:center;line-height:26px;font-family:'Liberation Serif',serif;font-size:20.5px;color:#222;padding-top:2px">15</div>
<div class="a" style="left:0;top:441px;width:36px;height:1px;background:#c6c6c6"></div>
<div class="a" style="left:37px;top:441px;width:960px;height:1px;background:#d9d9d9"></div>
<div class="a" style="left:0;top:415px;width:36px;text-align:center;line-height:26px;font-family:'Liberation Serif',serif;font-size:20.5px;color:#222;padding-top:2px">16</div>
<div class="a" style="left:0;top:467px;width:36px;height:1px;background:#c6c6c6"></div>
<div class="a" style="left:37px;top:467px;width:960px;height:1px;background:#d9d9d9"></div>
<div class="a" style="left:0;top:441px;width:36px;text-align:center;line-height:26px;font-family:'Liberation Serif',serif;font-size:20.5px;color:#222;padding-top:2px">17</div>
<div class="a" style="left:0;top:493px;width:36px;height:1px;background:#c6c6c6"></div>
<div class="a" style="left:37px;top:493px;width:960px;height:1px;background:#d9d9d9"></div>
<div class="a" style="left:0;top:467px;width:36px;text-align:center;line-height:26px;font-family:'Liberation Serif',serif;font-size:20.5px;color:#222;padding-top:2px">18</div>
<div class="a" style="left:0;top:519px;width:36px;height:1px;background:#c6c6c6"></div>
<div class="a" style="left:37px;top:519px;width:960px;height:1px;background:#d9d9d9"></div>
<div class="a" style="left:0;top:493px;width:36px;text-align:center;line-height:26px;font-family:'Liberation Serif',serif;font-size:20.5px;color:#222;padding-top:2px">19</div>
<div class="a" style="left:0;top:545px;width:36px;height:1px;background:#c6c6c6"></div>
<div class="a" style="left:37px;top:545px;width:960px;height:1px;background:#d9d9d9"></div>
<div class="a" style="left:0;top:519px;width:36px;text-align:center;line-height:26px;font-family:'Liberation Serif',serif;font-size:20.5px;color:#222;padding-top:2px">20</div>
<div class="a" style="left:0;top:571px;width:36px;height:1px;background:#c6c6c6"></div>
<div class="a" style="left:37px;top:571px;width:960px;height:1px;background:#d9d9d9"></div>
<div class="a" style="left:0;top:545px;width:36px;text-align:center;line-height:26px;font-family:'Liberation Serif',serif;font-size:20.5px;color:#222;padding-top:2px">21</div>
<div class="a" style="left:0;top:597px;width:36px;height:1px;background:#c6c6c6"></div>
<div class="a" style="left:37px;top:597px;width:960px;height:1px;background:#d9d9d9"></div>
<div class="a" style="left:0;top:571px;width:36px;text-align:center;line-height:26px;font-family:'Liberation Serif',serif;font-size:20.5px;color:#222;padding-top:2px">22</div>
<div class="a" style="left:37px;top:104px;width:292px;height:480px;background:#fdfdfd"></div>
<div class="a" style="left:37px;top:78px;width:293px;height:25px;background:#dde8f3"></div>
<div class="a" style="left:37px;top:103px;width:293px;height:1px;background:#9fc0e2"></div>
<div class="a" style="left:130px;top:81px;width:21px;height:21px;background:#f4f4f4;border:1px solid #c6c6c6"></div>
<svg class="a" style="left:136px;top:90px" width="9" height="5"><path d="M0 0h9L4.5 5z" fill="#666"/></svg>
<div class="a" style="left:40px;top:77px;line-height:26px;font-size:19px;letter-spacing:2px;font-weight:bold;color:#000;padding-top:1px">行标签</div>
<div class="a" style="left:157px;top:77px;line-height:26px;font-size:19px;letter-spacing:2px;font-weight:bold;color:#000;padding-top:1px">求和项<span style="display:inline-block;width:11px;text-align:center;letter-spacing:0">:</span>订单金额</div>
<div class="a cv" style="left:40px;top:103px">2011<svg class="sl" width="10.25" height="24" viewBox="0 0 10.25 24"><path d="M1.3 21.2L9.2 4.3" stroke="#2a2a2a" stroke-width="1"/></svg>1<svg class="sl" width="10.25" height="24" viewBox="0 0 10.25 24"><path d="M1.3 21.2L9.2 4.3" stroke="#2a2a2a" stroke-width="1"/></svg>1</div>
<div class="a cv" style="left:151px;top:103px;width:175px;text-align:right">30000</div>
<div class="a cv" style="left:40px;top:129px">2011<svg class="sl" width="10.25" height="24" viewBox="0 0 10.25 24"><path d="M1.3 21.2L9.2 4.3" stroke="#2a2a2a" stroke-width="1"/></svg>1<svg class="sl" width="10.25" height="24" viewBox="0 0 10.25 24"><path d="M1.3 21.2L9.2 4.3" stroke="#2a2a2a" stroke-width="1"/></svg>2</div>
<div class="a cv" style="left:151px;top:129px;width:175px;text-align:right">29850</div>
<div class="a cv" style="left:40px;top:155px">2011<svg class="sl" width="10.25" height="24" viewBox="0 0 10.25 24"><path d="M1.3 21.2L9.2 4.3" stroke="#2a2a2a" stroke-width="1"/></svg>1<svg class="sl" width="10.25" height="24" viewBox="0 0 10.25 24"><path d="M1.3 21.2L9.2 4.3" stroke="#2a2a2a" stroke-width="1"/></svg>3</div>
<div class="a cv" style="left:151px;top:155px;width:175px;text-align:right">48500</div>
<div class="a cv" style="left:40px;top:181px">2011<svg class="sl" width="10.25" height="24" viewBox="0 0 10.25 24"><path d="M1.3 21.2L9.2 4.3" stroke="#2a2a2a" stroke-width="1"/></svg>1<svg class="sl" width="10.25" height="24" viewBox="0 0 10.25 24"><path d="M1.3 21.2L9.2 4.3" stroke="#2a2a2a" stroke-width="1"/></svg>6</div>
<div class="a cv" style="left:151px;top:181px;width:175px;text-align:right">2150</div>
<div class="a cv" style="left:40px;top:207px">2011<svg class="sl" width="10.25" height="24" viewBox="0 0 10.25 24"><path d="M1.3 21.2L9.2 4.3" stroke="#2a2a2a" stroke-width="1"/></svg>1<svg class="sl" width="10.25" height="24" viewBox="0 0 10.25 24"><path d="M1.3 21.2L9.2 4.3" stroke="#2a2a2a" stroke-width="1"/></svg>8</div>
<div class="a cv" style="left:151px;top:207px;width:175px;text-align:right">5800</div>
<div class="a cv" style="left:40px;top:233px">2011<svg class="sl" width="10.25" height="24" viewBox="0 0 10.25 24"><path d="M1.3 21.2L9.2 4.3" stroke="#2a2a2a" stroke-width="1"/></svg>1<svg class="sl" width="10.25" height="24" viewBox="0 0 10.25 24"><path d="M1.3 21.2L9.2 4.3" stroke="#2a2a2a" stroke-width="1"/></svg>9</div>
<div class="a cv" style="left:151px;top:233px;width:175px;text-align:right">57580</div>
<div class="a cv" style="left:40px;top:259px">2011<svg class="sl" width="10.25" height="24" viewBox="0 0 10.25 24"><path d="M1.3 21.2L9.2 4.3" stroke="#2a2a2a" stroke-width="1"/></svg>1<svg class="sl" width="10.25" height="24" viewBox="0 0 10.25 24"><path d="M1.3 21.2L9.2 4.3" stroke="#2a2a2a" stroke-width="1"/></svg>10</div>
<div class="a cv" style="left:151px;top:259px;width:175px;text-align:right">23950</div>
<div class="a cv" style="left:40px;top:285px">2011<svg class="sl" width="10.25" height="24" viewBox="0 0 10.25 24"><path d="M1.3 21.2L9.2 4.3" stroke="#2a2a2a" stroke-width="1"/></svg>1<svg class="sl" width="10.25" height="24" viewBox="0 0 10.25 24"><path d="M1.3 21.2L9.2 4.3" stroke="#2a2a2a" stroke-width="1"/></svg>13</div>
<div class="a cv" style="left:151px;top:285px;width:175px;text-align:right">18000</div>
<div class="a cv" style="left:40px;top:311px">2011<svg class="sl" width="10.25" height="24" viewBox="0 0 10.25 24"><path d="M1.3 21.2L9.2 4.3" stroke="#2a2a2a" stroke-width="1"/></svg>1<svg class="sl" width="10.25" height="24" viewBox="0 0 10.25 24"><path d="M1.3 21.2L9.2 4.3" stroke="#2a2a2a" stroke-width="1"/></svg>14</div>
<div class="a cv" style="left:151px;top:311px;width:175px;text-align:right">33650</div>
<div class="a cv" style="left:40px;top:337px">2011<svg class="sl" width="10.25" height="24" viewBox="0 0 10.25 24"><path d="M1.3 21.2L9.2 4.3" stroke="#2a2a2a" stroke-width="1"/></svg>1<svg class="sl" width="10.25" height="24" viewBox="0 0 10.25 24"><path d="M1.3 21.2L9.2 4.3" stroke="#2a2a2a" stroke-width="1"/></svg>15</div>
<div class="a cv" style="left:151px;top:337px;width:175px;text-align:right">15200</div>
<div class="a cv" style="left:40px;top:363px">2011<svg class="sl" width="10.25" height="24" viewBox="0 0 10.25 24"><path d="M1.3 21.2L9.2 4.3" stroke="#2a2a2a" stroke-width="1"/></svg>1<svg class="sl" width="10.25" height="24" viewBox="0 0 10.25 24"><path d="M1.3 21.2L9.2 4.3" stroke="#2a2a2a" stroke-width="1"/></svg>16</div>
<div class="a cv" style="left:151px;top:363px;width:175px;text-align:right">21000</div>
<div class="a cv" style="left:40px;top:389px">2011<svg class="sl" width="10.25" height="24" viewBox="0 0 10.25 24"><path d="M1.3 21.2L9.2 4.3" stroke="#2a2a2a" stroke-width="1"/></svg>1<svg class="sl" width="10.25" height="24" viewBox="0 0 10.25 24"><path d="M1.3 21.2L9.2 4.3" stroke="#2a2a2a" stroke-width="1"/></svg>17</div>
<div class="a cv" style="left:151px;top:389px;width:175px;text-align:right">36000</div>
<div class="a cv" style="left:40px;top:415px">2011<svg class="sl" width="10.25" height="24" viewBox="0 0 10.25 24"><path d="M1.3 21.2L9.2 4.3" stroke="#2a2a2a" stroke-width="1"/></svg>1<svg class="sl" width="10.25" height="24" viewBox="0 0 10.25 24"><path d="M1.3 21.2L9.2 4.3" stroke="#2a2a2a" stroke-width="1"/></svg>21</div>
<div class="a cv" style="left:151px;top:415px;width:175px;text-align:right">7700</div>
<div class="a cv" style="left:40px;top:441px">2011<svg class="sl" width="10.25" height="24" viewBox="0 0 10.25 24"><path d="M1.3 21.2L9.2 4.3" stroke="#2a2a2a" stroke-width="1"/></svg>1<svg class="sl" width="10.25" height="24" viewBox="0 0 10.25 24"><path d="M1.3 21.2L9.2 4.3" stroke="#2a2a2a" stroke-width="1"/></svg>22</div>
<div class="a cv" style="left:151px;top:441px;width:175px;text-align:right">7300</div>
<div class="a cv" style="left:40px;top:467px">2011<svg class="sl" width="10.25" height="24" viewBox="0 0 10.25 24"><path d="M1.3 21.2L9.2 4.3" stroke="#2a2a2a" stroke-width="1"/></svg>1<svg class="sl" width="10.25" height="24" viewBox="0 0 10.25 24"><path d="M1.3 21.2L9.2 4.3" stroke="#2a2a2a" stroke-width="1"/></svg>24</div>
<div class="a cv" style="left:151px;top:467px;width:175px;text-align:right">29100</div>
<div class="a cv" style="left:40px;top:493px">2011<svg class="sl" width="10.25" height="24" viewBox="0 0 10.25 24"><path d="M1.3 21.2L9.2 4.3" stroke="#2a2a2a" stroke-width="1"/></svg>1<svg class="sl" width="10.25" height="24" viewBox="0 0 10.25 24"><path d="M1.3 21.2L9.2 4.3" stroke="#2a2a2a" stroke-width="1"/></svg>27</div>
<div class="a cv" style="left:151px;top:493px;width:175px;text-align:right">41100</div>
<div class="a cv" style="left:40px;top:519px">2011<svg class="sl" width="10.25" height="24" viewBox="0 0 10.25 24"><path d="M1.3 21.2L9.2 4.3" stroke="#2a2a2a" stroke-width="1"/></svg>1<svg class="sl" width="10.25" height="24" viewBox="0 0 10.25 24"><path d="M1.3 21.2L9.2 4.3" stroke="#2a2a2a" stroke-width="1"/></svg>28</div>
<div class="a cv" style="left:151px;top:519px;width:175px;text-align:right">30000</div>
<div class="a cv" style="left:40px;top:545px">2011<svg class="sl" width="10.25" height="24" viewBox="0 0 10.25 24"><path d="M1.3 21.2L9.2 4.3" stroke="#2a2a2a" stroke-width="1"/></svg>1<svg class="sl" width="10.25" height="24" viewBox="0 0 10.25 24"><path d="M1.3 21.2L9.2 4.3" stroke="#2a2a2a" stroke-width="1"/></svg>30</div>
<div class="a cv" style="left:151px;top:545px;width:175px;text-align:right">9850</div>
</div>
<div class="a" style="left:991px;top:271px;width:1px;height:546px;background:#ababab"></div>
<div class="a" style="left:995px;top:267px;width:19px;height:531px;background:#dcdcdc"></div>
<div class="a" style="left:995px;top:248px;width:19px;height:19px;background:#fdfdfd;border:1px solid #d0d0d0"></div>
<svg class="a" style="left:1000px;top:254px" width="9" height="6"><path d="M0 5.5h9L4.5 0z" fill="#666"/></svg>
<div class="a" style="left:995px;top:266px;width:19px;height:46px;background:#fdfdfd;border:1px solid #c6c6c6;border-top:2px solid #c0c0c0"></div>
<div class="a" style="left:995px;top:798px;width:19px;height:19px;background:#fdfdfd;border:1px solid #d0d0d0"></div>
<svg class="a" style="left:1000px;top:805px" width="9" height="6"><path d="M0 0h9L4.5 5.5z" fill="#666"/></svg>
<div class="a" style="left:1017px;top:247px;width:1px;height:596px;background:#cdcdcd"></div>
<div class="a" style="left:1032px;top:265px;line-height:20px;font-size:27px;color:#217346;line-height:30px;top:261px;letter-spacing:-.25px">数据透视表...</div>
<svg class="a" style="left:1198px;top:269px" width="12" height="7"><path d="M0 0h12L6 6.5z" fill="#777"/></svg>
<svg class="a" style="left:1248px;top:266px" width="14" height="14"><path d="M1 1l12 12M13 1L1 13" stroke="#555" stroke-width="1.6"/></svg>
<div class="a" style="left:1032px;top:306px;line-height:20px;font-size:15px;color:#404040;">选择要添加到报表的字段:</div>
<div class="a" style="left:1218px;top:300px;width:51px;height:31px;background:#fdfdfd;border:1px solid #c6c6c6"></div>
<svg class="a" style="left:1228px;top:306px" width="18" height="18" viewBox="0 0 18 18"><g fill="#959595"><circle cx="9" cy="9" r="6"/><rect x="6.8" y="1" width="4.4" height="16" rx=".5"/><rect x="6.8" y="1" width="4.4" height="16" rx=".5" transform="rotate(60 9 9)"/><rect x="6.8" y="1" width="4.4" height="16" rx=".5" transform="rotate(120 9 9)"/></g><circle cx="9" cy="9" r="3" fill="#fdfdfd"/></svg>
<svg class="a" style="left:1255px;top:312px" width="10" height="6"><path d="M0 0h10L5 5.5z" fill="#666"/></svg>
<div class="a" style="left:1032px;top:346px;width:237px;height:23px;background:#fdfdfd;border:1px solid #c6c6c6"></div>
<div class="a" style="left:1034px;top:347px;line-height:20px;font-size:15px;color:#7a7a7a;">搜索</div>
<svg class="a" style="left:1249px;top:348px" width="19" height="19" viewBox="0 0 19 19"><circle cx="11.5" cy="7.5" r="5.8" fill="none" stroke="#2f6fb3" stroke-width="1.8"/><path d="M7.5 11.5L1.5 17.5" stroke="#2f6fb3" stroke-width="2.2"/></svg>
<div class="a" style="left:1032px;top:390px;width:237px;height:158px;background:#fdfdfd"></div>
<div class="a" style="left:1034px;top:393px;width:16px;height:16px;background:#fdfdfd;border:1px solid #8a8a8a"></div>
<svg class="a" style="left:1036px;top:395px" width="12" height="12"><path d="M1.5 6l3 3.5 6-8" fill="none" stroke="#666" stroke-width="1.5"/></svg>
<div class="a" style="left:1056px;top:391px;line-height:20px;font-size:15px;color:#383838;font-weight:bold">订单日期</div>
<div class="a" style="left:1034px;top:420px;width:16px;height:16px;background:#fdfdfd;border:1px solid #8a8a8a"></div>
<div class="a" style="left:1056px;top:418px;line-height:20px;font-size:15px;color:#404040;">产品</div>
<div class="a" style="left:1034px;top:444px;width:16px;height:16px;background:#fdfdfd;border:1px solid #8a8a8a"></div>
<div class="a" style="left:1056px;top:442px;line-height:20px;font-size:15px;color:#404040;">单价</div>
<div class="a" style="left:1034px;top:469px;width:16px;height:16px;background:#fdfdfd;border:1px solid #8a8a8a"></div>
<div class="a" style="left:1056px;top:467px;line-height:20px;font-size:15px;color:#404040;">数量</div>
<div class="a" style="left:1034px;top:494px;width:16px;height:16px;background:#fdfdfd;border:1px solid #8a8a8a"></div>
<svg class="a" style="left:1036px;top:496px" width="12" height="12"><path d="M1.5 6l3 3.5 6-8" fill="none" stroke="#666" stroke-width="1.5"/></svg>
<div class="a" style="left:1056px;top:492px;line-height:20px;font-size:15px;color:#383838;font-weight:bold">订单金额</div>
<div class="a" style="left:1034px;top:526px;line-height:20px;font-size:15px;color:#404040;">更多表格...</div>
<div class="a" style="left:1249px;top:410px;width:19px;height:28px;background:#dcdcdc"></div>
<div class="a" style="left:1249px;top:392px;width:19px;height:19px;background:#fdfdfd;border:1px solid #d0d0d0"></div>
<svg class="a" style="left:1253px;top:398px" width="11" height="6"><path d="M0 6h11L5.5 0z" fill="#666"/></svg>
<div class="a" style="left:1249px;top:437px;width:19px;height:92px;background:#fdfdfd;border:1px solid #c6c6c6"></div>
<div class="a" style="left:1249px;top:529px;width:19px;height:18px;background:#fdfdfd;border:1px solid #d0d0d0"></div>
<svg class="a" style="left:1253px;top:535px" width="11" height="6"><path d="M0 0h11L5.5 6z" fill="#666"/></svg>
<div class="a" style="left:1034px;top:565px;width:234px;height:1px;border-top:1px dotted #bdbdbd"></div>
<div class="a" style="left:1035px;top:571px;line-height:20px;font-size:15px;color:#404040;">在以下区域间拖动字段:</div>
<svg class="a" style="left:1040px;top:613px" width="14" height="14"><path d="M0 0h14L8.5 6v8h-3V6z" fill="#8a8a8a"/></svg>
<div class="a" style="left:1062px;top:610px;line-height:20px;font-size:15px;color:#404040;">筛选</div>
<svg class="a" style="left:1160px;top:613px" width="12" height="14"><path d="M.5 0v14M3.5 0v14M6.5 0v14M9.5 0v14" stroke="#9a9a9a" stroke-width="1.2"/></svg>
<div class="a" style="left:1180px;top:610px;line-height:20px;font-size:15px;color:#404040;">列</div>
<div class="a" style="left:1151px;top:608px;width:1px;height:176px;border-left:1px dashed #c4c4c4"></div>
<div class="a" style="left:1034px;top:696px;width:234px;height:1px;border-top:1px dashed #c4c4c4"></div>
<div class="a" style="left:1034px;top:636px;width:111px;height:54px;background:#fdfdfd"></div>
<div class="a" style="left:1154px;top:636px;width:114px;height:54px;background:#fdfdfd"></div>
<svg class="a" style="left:1040px;top:709px" width="13" height="9"><path d="M0 .5h13M0 3h13M0 5.5h13M0 8h13" stroke="#8a8a8a" stroke-width="1.1"/></svg>
<div class="a" style="left:1062px;top:705px;line-height:20px;font-size:15px;color:#404040;">行</div>
<svg class="a" style="left:1160px;top:706px" width="12" height="12"><path d="M11.5 1H1l5 5-5 5h10.5" fill="none" stroke="#8a8a8a" stroke-width="1.6"/></svg>
<div class="a" style="left:1180px;top:705px;line-height:20px;font-size:15px;color:#404040;">值</div>
<div class="a" style="left:1034px;top:730px;width:111px;height:54px;background:#fdfdfd"></div>
<div class="a" style="left:1154px;top:730px;width:114px;height:54px;background:#fdfdfd"></div>
<div class="a" style="left:1036px;top:732px;width:108px;height:29px;background:#fdfdfd;border:1px solid #b5b5b5"></div>
<div class="a" style="left:1045px;top:737px;line-height:20px;font-size:15px;color:#303030;">订单日期</div>
<svg class="a" style="left:1122px;top:744px" width="11" height="6"><path d="M0 0h11L5.5 6z" fill="#555"/></svg>
<div class="a" style="left:1155px;top:732px;width:113px;height:29px;background:#fdfdfd;border:1px solid #b5b5b5"></div>
<div class="a" style="left:1164px;top:737px;line-height:20px;font-size:15px;color:#303030;">求和项:订...</div>
<svg class="a" style="left:1246px;top:744px" width="11" height="6"><path d="M0 0h11L5.5 6z" fill="#555"/></svg>
<div class="a" style="left:1035px;top:812px;width:16px;height:16px;background:#fdfdfd;border:1px solid #8a8a8a"></div>
<div class="a" style="left:1058px;top:811px;line-height:20px;font-size:15px;color:#303030;">延迟布局更新</div>
<div class="a" style="left:1228px;top:806px;width:40px;height:28px;background:#fbfbfb"></div>
<div class="a" style="left:1233px;top:810px;line-height:20px;font-size:15px;color:#b8b8b8;">更新</div>
<div class="a" style="left:0;top:816px;width:992px;height:1px;background:#ababab"></div>
<svg class="a" style="left:27px;top:825px" width="7" height="11"><path d="M6.5 0v11L0 5.5z" fill="#c3c3c3"/></svg>
<svg class="a" style="left:57px;top:825px" width="7" height="11"><path d="M.5 0v11L7 5.5z" fill="#c3c3c3"/></svg>
<div class="a" style="left:103px;top:816px;width:83px;height:26px;background:#fdfdfd;border-left:1px solid #c6c6c6;border-right:1px solid #c6c6c6"></div>
<div class="a" style="left:103px;top:840px;width:83px;height:2px;background:#217346"></div>
<div class="a" style="left:116px;top:817px;line-height:20px;font-size:17.5px;color:#217346;">Sheet2</div>
<div class="a" style="left:197px;top:817px;line-height:20px;font-size:17.5px;color:#404040;">DB</div>
<div class="a" style="left:233px;top:822px;width:1px;height:19px;background:#c6c6c6"></div>
<svg class="a" style="left:266px;top:820px" width="21" height="21"><circle cx="10.5" cy="10.5" r="9.5" fill="none" stroke="#777" stroke-width="1.3"/><path d="M5.5 10.5h10M10.5 5.5v10" stroke="#777" stroke-width="1.6"/></svg>
<svg class="a" style="left:607px;top:824px" width="5" height="13"><rect x="0" y="0" width="3.5" height="3" fill="#aaa"/><rect x="0" y="5" width="3.5" height="3" fill="#aaa"/><rect x="0" y="10" width="3.5" height="3" fill="#aaa"/></svg>
<div class="a" style="left:626px;top:821px;width:367px;height:19px;background:#dcdcdc"></div>
<div class="a" style="left:626px;top:821px;width:19px;height:19px;background:#fdfdfd;border:1px solid #d0d0d0"></div>
<svg class="a" style="left:632px;top:825px" width="6" height="11"><path d="M6 0v11L0 5.5z" fill="#666"/></svg>
<div class="a" style="left:644px;top:821px;width:292px;height:19px;background:#fdfdfd;border:1px solid #c6c6c6"></div>
<div class="a" style="left:975px;top:821px;width:19px;height:19px;background:#fdfdfd;border:1px solid #d0d0d0"></div>
<svg class="a" style="left:982px;top:825px" width="6" height="11"><path d="M0 0v11L6 5.5z" fill="#666"/></svg>
<div class="a" style="left:0;top:845px;width:1277px;height:27px;background:#f1f1f1;border-top:1px solid #cfcfcf"></div>
<div class="a" style="left:0;top:846px;width:1277px;height:2px;background:#e4eeee"></div>
<div class="a" style="left:7px;top:849px;line-height:20px;font-size:15px;color:#303030;">就绪</div>
<div class="a" style="left:926px;top:846px;width:41px;height:26px;background:#c6c6c6"></div>
<svg class="a" style="left:938px;top:851px" width="17" height="16"><rect x=".5" y=".5" width="16" height="15" fill="none" stroke="#666"/><path d="M5.8 0v16M11.2 0v16M0 5.5h17M0 10.5h17" stroke="#666"/></svg>
<svg class="a" style="left:979px;top:851px" width="17" height="15"><rect x=".5" y=".5" width="16" height="14" fill="none" stroke="#666"/><rect x="4.5" y="2.5" width="8" height="10" fill="none" stroke="#666"/><path d="M6 5.5h5M6 7.5h5M6 9.5h5" stroke="#666"/></svg>
<svg class="a" style="left:1021px;top:851px" width="17" height="16"><rect x=".5" y=".5" width="16" height="15" fill="none" stroke="#666"/><path d="M.5 9.5H10.5V0M5.5 0V9.5" fill="none" stroke="#666"/></svg>
<div class="a" style="left:1056px;top:858px;width:10px;height:2px;background:#555"></div>
<div class="a" style="left:1070px;top:859px;width:124px;height:1px;background:#a0a0a0"></div>
<div class="a" style="left:1130px;top:852px;width:6px;height:14px;background:#666"></div>
<div class="a" style="left:1199px;top:858px;width:10px;height:2px;background:#555"></div>
<div class="a" style="left:1203px;top:854px;width:2px;height:10px;background:#555"></div>
<div class="a" style="left:1221px;top:849px;line-height:20px;font-size:16px;color:#303030;">100%</div>

<div class="a" style="left:0;top:0;width:1277px;height:1px;background:#1a1a1a"></div>
<div class="a" style="left:0;top:0;width:1px;height:872px;background:#1a1a1a"></div>
<div class="a" style="left:1276px;top:0;width:1px;height:872px;background:#1a1a1a"></div>
</body></html>
